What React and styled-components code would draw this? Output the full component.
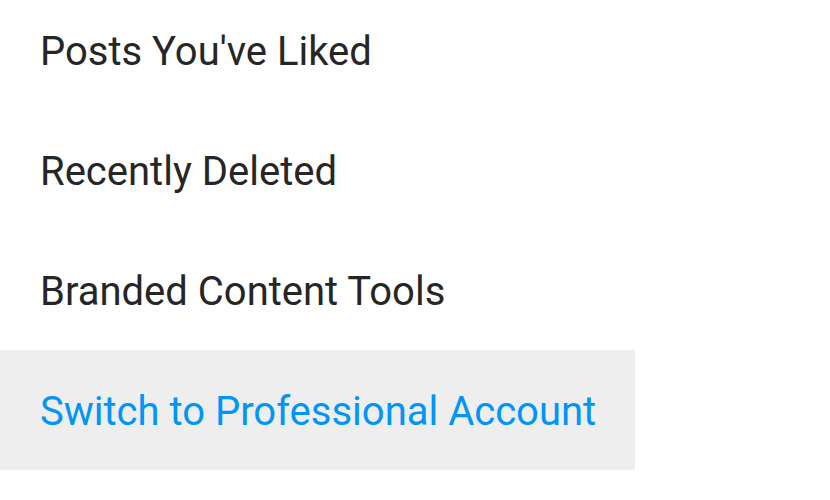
import React from "react";
import styled, { createGlobalStyle } from "styled-components";

const Global = createGlobalStyle`
  html, body { margin: 0; padding: 0; background: #ffffff; }
  body { font-family: Roboto, "Noto Sans", sans-serif; overflow: hidden; }
`;

const Menu = styled.ul`
  list-style: none;
  margin: -10px 0 0 0;
  padding: 0;
  width: 635px;
`;

const Item = styled.li`
  box-sizing: border-box;
  height: 120px;
  display: flex;
  align-items: center;
  padding: 4px 0 0 40px;
  font-size: 40px;
  line-height: 1;
  color: ${(p) => (p.$accent ? "#0095f6" : "#262626")};
  background: ${(p) => (p.$active ? "#eeeeee" : "transparent")};
`;

const items = [
  { label: "Posts You've Liked" },
  { label: "Recently Deleted" },
  { label: "Branded Content Tools" },
  { label: "Switch to Professional Account", accent: true, active: true },
];

export default function App() {
  return (
    <>
      <Global />
      <Menu>
        {items.map((it) => (
          <Item key={it.label} $accent={it.accent} $active={it.active}>
            {it.label}
          </Item>
        ))}
      </Menu>
    </>
  );
}
